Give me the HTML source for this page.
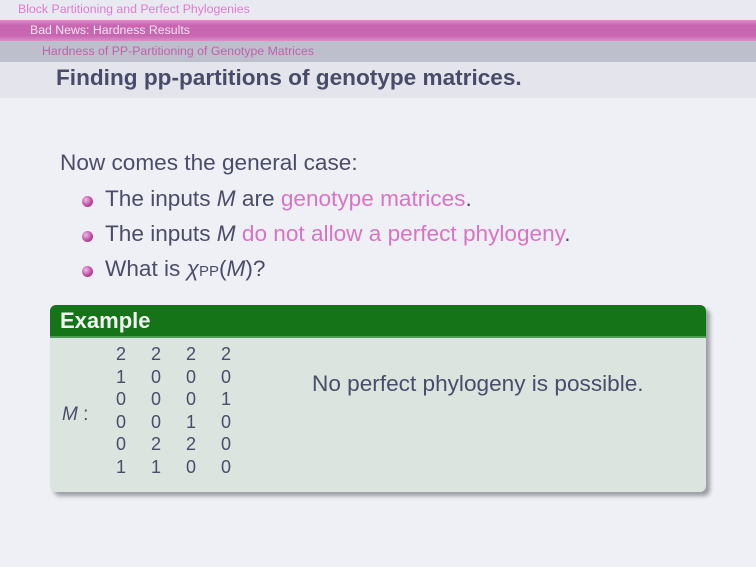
<!DOCTYPE html>
<html><head><style>
body{margin:0;width:756px;height:567px;background:#eff0f5;font-family:"Liberation Sans",sans-serif;position:relative;overflow:hidden;color:#4b4d68}
.a{position:absolute;white-space:nowrap}
.pk{color:#d874c4}
.b{position:absolute;width:11px;height:11px;border-radius:50%;background:radial-gradient(circle at 35% 35%,#f2b8e6,#b8479e 60%,#7a2a68)}
.n{position:absolute;font-size:18px;width:20px;text-align:center}
</style></head><body>
<div class="a" style="left:0;top:0;width:756px;height:20px;background:#e8e9f1"></div>
<div class="a" style="left:18px;top:2px;font-size:12.3px;color:#e27bd0">Block Partitioning and Perfect Phylogenies</div>
<div class="a" style="left:0;top:20px;width:756px;height:21px;background:linear-gradient(#d990c8,#c866b2 25%,#c866b2 75%,#d990c8)"></div>
<div class="a" style="left:30px;top:23px;font-size:12.3px;color:#f1e4ee">Bad News: Hardness Results</div>
<div class="a" style="left:0;top:41px;width:756px;height:21px;background:#bdc0cc"></div>
<div class="a" style="left:42px;top:44px;font-size:12.3px;color:#c060ac">Hardness of PP-Partitioning of Genotype Matrices</div>
<div class="a" style="left:0;top:62px;width:756px;height:36px;background:#e4e5ec"></div>
<div class="a" style="left:56px;top:65px;font-size:22.6px;font-weight:bold;color:#484c68">Finding pp-partitions of genotype matrices.</div>
<div class="a" style="left:60px;top:150px;font-size:22.6px">Now comes the general case:</div>
<div class="b" style="left:82px;top:196px"></div>
<div class="a" style="left:105px;top:186px;font-size:22.6px">The inputs <i>M</i> are <span class="pk">genotype matrices</span>.</div>
<div class="b" style="left:82px;top:231px"></div>
<div class="a" style="left:105px;top:221px;font-size:22.6px">The inputs <i>M</i> <span class="pk">do not allow a perfect phylogeny</span>.</div>
<div class="b" style="left:82px;top:266px"></div>
<div class="a" style="left:105px;top:256px;font-size:22.6px">What is <i>χ</i><span style="font-size:15px">PP</span>(<i>M</i>)?</div>
<div class="a" style="left:54px;top:309px;width:656px;height:187px;border-radius:6px;background:#9a9ca4;filter:blur(2px)"></div>
<div class="a" style="left:50px;top:305px;width:656px;height:187px;border-radius:6px;overflow:hidden;background:#dbe4df">
<div style="height:31px;background:#157318;border-bottom:2px solid #4e9c55"></div>
<div class="a" style="left:10px;top:3px;font-size:22px;font-weight:bold;color:#f2f4f2">Example</div>
<div class="a" style="left:12px;top:99px;font-size:19px"><i>M</i> :</div>
<div class="a" style="left:262px;top:66px;font-size:22.6px">No perfect phylogeny is possible.</div>
</div>
<div id="m"></div>
<script>
var r=["2222","1000","0001","0010","0220","1100"],h="";
for(var i=0;i<6;i++)for(var j=0;j<4;j++)h+='<div class="n" style="left:'+(111+j*35)+'px;top:'+(344+i*22.5)+'px">'+r[i][j]+'</div>';
document.getElementById('m').innerHTML=h;
</script>
</body></html>
